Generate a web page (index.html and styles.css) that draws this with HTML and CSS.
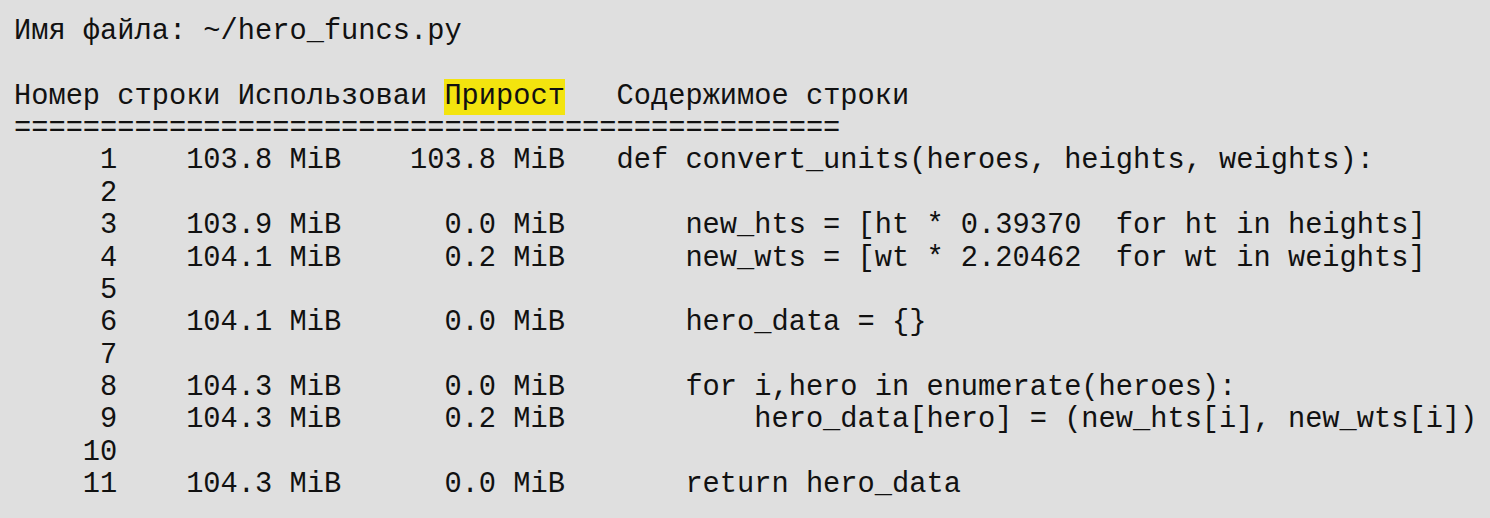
FILE: index.html
```html
<!DOCTYPE html>
<html lang="ru">
<head>
<meta charset="utf-8">
<title>memory_profiler</title>
<link rel="stylesheet" href="styles.css">
</head>
<body>
<div class="report">
  <div class="line">Имя файла: ~/hero_funcs.py</div>
  <div class="line"> </div>
  <div class="line">Номер строки Использоваи <span class="hl">Прирост</span>   Содержимое строки</div>
  <div class="line">================================================</div>
  <div class="line">     1    103.8 MiB    103.8 MiB   def convert_units(heroes, heights, weights):</div>
  <div class="line">     2</div>
  <div class="line">     3    103.9 MiB      0.0 MiB       new_hts = [ht * 0.39370  for ht in heights]</div>
  <div class="line">     4    104.1 MiB      0.2 MiB       new_wts = [wt * 2.20462  for wt in weights]</div>
  <div class="line">     5</div>
  <div class="line">     6    104.1 MiB      0.0 MiB       hero_data = {}</div>
  <div class="line">     7</div>
  <div class="line">     8    104.3 MiB      0.0 MiB       for i,hero in enumerate(heroes):</div>
  <div class="line">     9    104.3 MiB      0.2 MiB           hero_data[hero] = (new_hts[i], new_wts[i])</div>
  <div class="line">    10</div>
  <div class="line">    11    104.3 MiB      0.0 MiB       return hero_data</div>
</div>
</body>
</html>
```

FILE: styles.css
```css
html, body {
  margin: 0;
  padding: 0;
  background: #dfdfdf;
  height: 100%;
  overflow: hidden;
}

.report {
  display: flex;
  flex-direction: column;
  padding: 16px 0 0 14px;
  font-family: "Liberation Mono", "DejaVu Sans Mono", monospace;
  font-size: 28.7px;
  line-height: 32.36px;
  color: #111111;
}

.line {
  height: 32.36px;
  white-space: pre;
  overflow: visible;
}

.hl {
  background: #f3e40e;
  padding: 1px 0 2px;
}
```
